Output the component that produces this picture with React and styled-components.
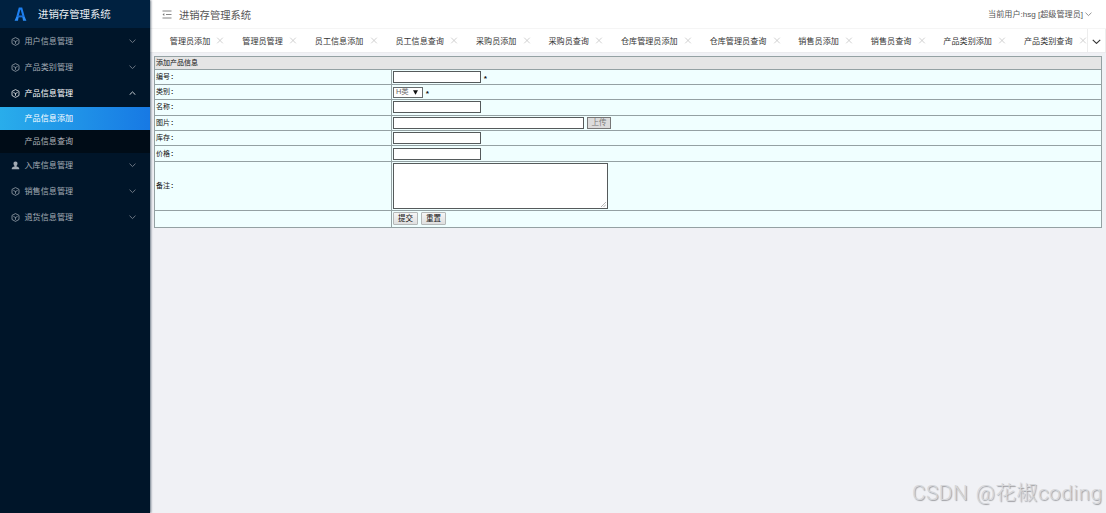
import React from "react";
import styled, { createGlobalStyle } from "styled-components";

const GlobalStyle = createGlobalStyle`
  * {
    box-sizing: border-box;
  }
  body {
    margin: 0;
    background: #f0f1f5;
    font-family: "Liberation Sans", "Noto Sans CJK SC", sans-serif;
    overflow: hidden;
  }
`;

const Layout = styled.div`
  display: flex;
  width: 1106px;
  height: 513px;
`;

const Side = styled.aside`
  flex: none;
  width: 150px;
  background: #001529;
  box-shadow: 1px 0 2px rgba(0, 21, 41, 0.55);
  z-index: 1;
`;

const Logo = styled.div`
  display: flex;
  align-items: center;
  height: 28px;
  padding: 1px 0 0 14px;
  gap: 11px;
  background: #002140;
  color: #e9eef3;
  font-size: 10.4px;
  line-height: 28px;
  white-space: nowrap;
`;

const Menu = styled.div`
  padding-top: 0.6px;
`;

const MenuItem = styled.div`
  display: flex;
  align-items: center;
  height: 26px;
  padding: 0 14px 1px 11px;
  color: ${props => (props.$open ? "#ffffff" : "#a3abb4")};
  font-size: 8.1px;
  line-height: 10px;
  white-space: nowrap;

  span {
    flex: 1;
    padding: 2px 0 0 4.5px;
  }
`;

const SubMenu = styled.div`
  padding-top: 0.4px;
  background: #000c17;
`;

const SubItem = styled.div`
  height: 23px;
  padding-left: 24.5px;
  line-height: 23px;
  font-size: 8.1px;
  color: ${props => (props.$active ? "#ffffff" : "#b0b5ba")};
  background: ${props =>
    props.$active ? "linear-gradient(to right, #29adeb, #1779e4)" : "none"};
`;

const Main = styled.main`
  flex: 1;
  min-width: 0;
`;

const Header = styled.header`
  display: flex;
  align-items: center;
  justify-content: space-between;
  height: 29px;
  padding: 1px 14px 0 12px;
  background: #fff;
  border-bottom: 1px solid #f5f5f5;
  color: #555;
`;

const HeaderTitle = styled.div`
  display: flex;
  align-items: center;
  gap: 7px;
  font-size: 10.3px;
`;

const User = styled.div`
  display: flex;
  align-items: center;
  gap: 2px;
  font-size: 8.1px;
  line-height: 10px;
  white-space: nowrap;
`;

const TabBar = styled.nav`
  display: flex;
  height: 24px;
  background: #fff;
  border-bottom: 1px solid #ebebee;
`;

const TabList = styled.div`
  display: flex;
  flex: 1;
  min-width: 0;
  padding-left: 11.4px;
  overflow: hidden;
`;

const Tab = styled.div`
  display: flex;
  flex: none;
  align-items: center;
  gap: 6.2px;
  padding: 0 9.45px 0 8.4px;
  color: #333;
  font-size: 8.1px;
  white-space: nowrap;

  &:last-child {
    padding-right: 0;
  }
`;

const TabMore = styled.div`
  display: flex;
  flex: none;
  align-items: center;
  justify-content: center;
  width: 19px;
  padding-top: 2px;
  border: solid #ededed;
  border-width: 0 1px;
`;

const FormTable = styled.table`
  width: 948px;
  margin: 3px 0 0 4px;
  border-collapse: collapse;
  table-layout: fixed;
  background: #f0ffff;
  border: 1px solid #75797b;
  color: #111;
  font-size: 7px;
  line-height: 8px;
`;

const Row = styled.tr`
  height: ${props => props.$height}px;
`;

const Cell = styled.td`
  padding: 0 1px 0 1px;
  border: 1px solid #94a1a3;
  vertical-align: middle;
  background: ${props => (props.$head ? "#e5e5e5" : "none")};
`;

const Label = styled.span`
  &::after {
    content: ":";
    padding-left: 1px;
    font-weight: bold;
  }
`;

const Field = styled.div`
  display: flex;
  align-items: center;
  gap: 3px;
`;

const Input = styled.input`
  display: block;
  width: ${props => props.$width}px;
  height: 12px;
  margin: 0;
  padding: 0 1px;
  border: 1px solid #555a5b;
  background: #fff;
  font-size: 7px;
`;

const SelectBox = styled.div`
  display: flex;
  align-items: center;
  justify-content: space-between;
  width: 30px;
  height: 11px;
  padding: 0 4px 0 2px;
  border: 1px solid #666b6c;
  background: #fff;
  color: #666;
  font-size: 7.4px;
`;

const Star = styled.span`
  width: 6px;
  margin-left: -1px;
  font-family: "Liberation Mono", monospace;
  font-size: 8px;
  font-weight: bold;
  line-height: 8px;
  padding-top: 3px;
`;

const TextArea = styled.textarea`
  display: block;
  width: 215px;
  height: 46px;
  margin: 0;
  padding: 1px;
  border: 1px solid #555a5b;
  background: #fff;
  resize: none;
`;

const TextAreaWrap = styled.div`
  position: relative;
  width: 215px;

  svg {
    position: absolute;
    right: 2px;
    bottom: 2px;
  }
`;

const Button = styled.button`
  width: 25px;
  height: 13px;
  margin: 0;
  padding: 0;
  border: 1px solid #b4b8b8;
  border-radius: 1px;
  background: linear-gradient(#f5f5f5, #dfdfdf);
  color: #111;
  font-family: inherit;
  font-size: 7.5px;
  line-height: 10px;
`;

const UploadButton = styled(Button)`
  width: 24px;
  height: 12px;
  border: 1px solid #777;
  border-radius: 0;
  background: #dcdcdc;
  color: #777;
`;

const Watermark = styled.div`
  position: absolute;
  left: 912px;
  top: 478px;
  color: #d6d7da;
  font-family: Roboto, "Noto Sans CJK SC", sans-serif;
  font-size: 20.8px;
  font-weight: 300;
  letter-spacing: 0.5px;
  word-spacing: 2px;
  line-height: 30px;
  text-shadow: 1px 1px 1px #9b9ca0;
  white-space: nowrap;
`;

const LogoIcon = () => (
  <svg width="13" height="15" viewBox="0 0 13 15" fill="none">
    <path d="M3 11 5.6 1.5h1.8L10 11" stroke="#1c7ff0" strokeWidth="2.1" />
    <path d="M3.5 9.4h6" stroke="#1a6fd8" strokeWidth="1.9" />
    <path d="M.6 13.8 2.2 10h2.4l-.6 3.8zM12.4 13.8 10.8 10H8.4l.6 3.8z" fill="#2a8cf5" />
  </svg>
);

const CubeIcon = () => (
  <svg width="9" height="9" viewBox="0 0 9 9" fill="none" stroke="currentColor" strokeWidth="0.75">
    <path d="M4.5.6 8 2.4v4.1L4.5 8.4 1 6.5V2.4z" strokeLinejoin="round" />
    <path d="M2.4 3.4 4.5 4.5l2.1-1.1M4.5 4.5v2.3" />
  </svg>
);

const PersonIcon = () => (
  <svg width="9" height="9" viewBox="0 0 9 9" fill="currentColor">
    <path d="M4.5.5c1.3 0 2 .9 2 2 0 1-.5 1.9-1 2.3v.8c1.5.4 2.8.8 2.8 2.6H.7c0-1.8 1.3-2.2 2.8-2.6v-.8c-.5-.4-1-1.3-1-2.3 0-1.1.7-2 2-2z" />
  </svg>
);

const Chevron = ({ up, size = 7, color = "currentColor", width = 0.9 }) => (
  <svg width={size} height={size / 2 + 1} viewBox="0 0 8 5" fill="none">
    <path
      d={up ? "M.6 4.3 4 1l3.4 3.3" : "M.6.7 4 4 7.4.7"}
      stroke={color}
      strokeWidth={width}
    />
  </svg>
);

const FoldIcon = () => (
  <svg width="10" height="9" viewBox="0 0 10 9" fill="none" stroke="#777" strokeWidth="0.9">
    <path d="M.5 1h9M4 4.5h5.5M.5 8h9" />
    <path d="M2.3 3 .5 4.5 2.3 6z" fill="#777" stroke="none" />
  </svg>
);

const CloseIcon = () => (
  <svg width="8" height="7" viewBox="0 0 8 7" fill="none" stroke="#c4c4c4" strokeWidth="0.8">
    <path d="m1.2.7 5.6 5.6M6.8.7 1.2 6.3" />
  </svg>
);

const menu = [
  { title: "用户信息管理" },
  { title: "产品类别管理" },
  { title: "产品信息管理", items: ["产品信息添加", "产品信息查询"] },
  { title: "入库信息管理", person: true },
  { title: "销售信息管理" },
  { title: "退货信息管理" }
];

const tabs = [
  "管理员添加",
  "管理员管理",
  "员工信息添加",
  "员工信息查询",
  "采购员添加",
  "采购员查询",
  "仓库管理员添加",
  "仓库管理员查询",
  "销售员添加",
  "销售员查询",
  "产品类别添加",
  "产品类别查询"
];

const FormRow = ({ label, height, children }) => (
  <Row $height={height}>
    <Cell>{label && <Label>{label}</Label>}</Cell>
    <Cell>
      <Field>{children}</Field>
    </Cell>
  </Row>
);

const App = () => {
  return (
    <Layout>
      <GlobalStyle />
      <Side>
        <Logo>
          <LogoIcon />
          进销存管理系统
        </Logo>
        <Menu>
          {menu.map(item => (
            <React.Fragment key={item.title}>
              <MenuItem $open={!!item.items}>
                {item.person ? <PersonIcon /> : <CubeIcon />}
                <span>{item.title}</span>
                <Chevron
                  up={!!item.items}
                  color={item.items ? "#e4e8ec" : "#7b8590"}
                  width={1}
                />
              </MenuItem>
              {item.items && (
                <SubMenu>
                  {item.items.map((sub, index) => (
                    <SubItem key={sub} $active={index === 0}>
                      {sub}
                    </SubItem>
                  ))}
                </SubMenu>
              )}
            </React.Fragment>
          ))}
        </Menu>
      </Side>
      <Main>
        <Header>
          <HeaderTitle>
            <FoldIcon />
            进销存管理系统
          </HeaderTitle>
          <User>
            当前用户:hsg [超级管理员]
            <Chevron color="#777" />
          </User>
        </Header>
        <TabBar>
          <TabList>
            {tabs.map(tab => (
              <Tab key={tab}>
                {tab}
                <CloseIcon />
              </Tab>
            ))}
          </TabList>
          <TabMore>
            <Chevron size={9} color="#333" width={1} />
          </TabMore>
        </TabBar>
        <FormTable>
          <colgroup>
            <col width="237" />
            <col />
          </colgroup>
          <tbody>
            <Row $height={13}>
              <Cell $head colSpan={2}>
                添加产品信息
              </Cell>
            </Row>
            <FormRow label="编号" height={15.3}>
              <Input $width={88} />
              <Star>*</Star>
            </FormRow>
            <FormRow label="类别" height={15}>
              <SelectBox>
                H类
                <svg width="5" height="5" viewBox="0 0 5 5">
                  <path d="M0 .3h5L2.5 4.7z" fill="#111" />
                </svg>
              </SelectBox>
              <Star>*</Star>
            </FormRow>
            <FormRow label="名称" height={15.3}>
              <Input $width={88} />
            </FormRow>
            <FormRow label="图片" height={15.4}>
              <Input $width={191} />
              <UploadButton>上传</UploadButton>
            </FormRow>
            <FormRow label="库存" height={15.4}>
              <Input $width={88} />
            </FormRow>
            <FormRow label="价格" height={15.4}>
              <Input $width={88} />
            </FormRow>
            <FormRow label="备注" height={49}>
              <TextAreaWrap>
                <TextArea />
                <svg width="5" height="5" viewBox="0 0 5 5" stroke="#888" strokeWidth="0.6">
                  <path d="M0 5 5 0M2.5 5 5 2.5" />
                </svg>
              </TextAreaWrap>
            </FormRow>
            <FormRow height={17}>
              <Button>提交</Button>
              <Button>重置</Button>
            </FormRow>
          </tbody>
        </FormTable>
      </Main>
      <Watermark>CSDN @花椒coding</Watermark>
    </Layout>
  );
};

export default App;
